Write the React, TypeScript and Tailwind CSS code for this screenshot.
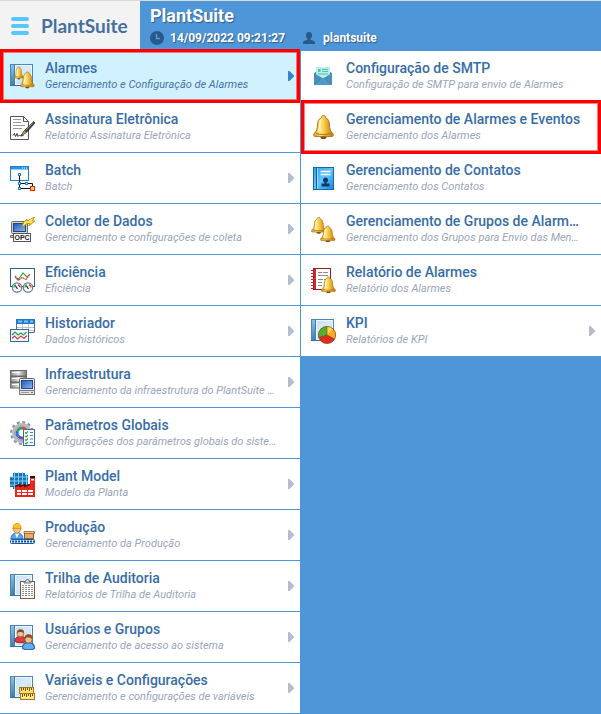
import type { ReactNode } from "react";
import clsx from "clsx";

type MenuItem = {
  title: string;
  desc: string;
  icon: ReactNode;
  hasChildren?: boolean;
  active?: boolean;
  marked?: boolean;
};

/* Gradients shared by all the menu icons */
function IconDefs() {
  return (
    <svg className="absolute h-0 w-0" aria-hidden="true">
      <defs>
        <linearGradient id="gold" x1="0" y1="0" x2="1" y2="0">
          <stop offset="0" stopColor="#d99a1c" />
          <stop offset="0.35" stopColor="#ffe98a" />
          <stop offset="0.6" stopColor="#f3bd35" />
          <stop offset="1" stopColor="#b97a10" />
        </linearGradient>
        <linearGradient id="page" x1="0" y1="0" x2="1" y2="1">
          <stop offset="0" stopColor="#c2dcf2" />
          <stop offset="0.5" stopColor="#d9ebf9" />
          <stop offset="1" stopColor="#a9cdea" />
        </linearGradient>
        <linearGradient id="spine" x1="0" y1="0" x2="0" y2="1">
          <stop offset="0" stopColor="#8dbfe3" />
          <stop offset="1" stopColor="#3f7fb2" />
        </linearGradient>
        <linearGradient id="screen" x1="0" y1="0" x2="1" y2="1">
          <stop offset="0" stopColor="#1f56b8" />
          <stop offset="1" stopColor="#8db9f2" />
        </linearGradient>
        <linearGradient id="steel" x1="0" y1="0" x2="1" y2="0">
          <stop offset="0" stopColor="#8a8a8a" />
          <stop offset="0.5" stopColor="#e2e2e2" />
          <stop offset="1" stopColor="#777777" />
        </linearGradient>
        <linearGradient id="azure" x1="0" y1="0" x2="1" y2="1">
          <stop offset="0" stopColor="#2ba3ee" />
          <stop offset="0.5" stopColor="#63c6ff" />
          <stop offset="1" stopColor="#1583d6" />
        </linearGradient>
      </defs>
    </svg>
  );
}

function Icon({ children }: { children: ReactNode }) {
  return (
    <svg className="h-[25px] w-[25px] shrink-0" viewBox="0 0 25 25" fill="none" aria-hidden="true">
      {children}
    </svg>
  );
}

function Book() {
  return (
    <g>
      <rect x="0.5" y="0.5" width="22" height="21" fill="url(#page)" stroke="#4d86b5" />
      <path d="M5.5 1.5h16v19h-16z" stroke="#eef7fd" />
      <path d="M1 1h3v20H1z" fill="url(#spine)" />
      <path d="M4.5 1v20" stroke="#3f7fb2" />
      <path d="M0 21.5h23" stroke="#356f9f" />
    </g>
  );
}

function Bell({ transform }: { transform?: string }) {
  return (
    <g transform={transform}>
      <ellipse cx="10.5" cy="22" rx="3" ry="2" fill="#7a4b08" />
      <path
        d="M10.5 .6c-1.5 0-2.3 1-2 2.1C5.6 3.800 4.600 6.500 4.500 10c-.1 4-.9 6.300-3.300 8.500-.9.900-.6 2.700.4 2.900h17.800c1-.2 1.300-2 .4-2.900-2.400-2.200-3.200-4.500-3.300-8.500-.1-3.500-1.100-6.200-4-7.300.3-1.100-.5-2.100-2-2.100z"
        fill="url(#gold)"
        stroke="#a66b0c"
        strokeWidth="0.9"
      />
      <path d="M7.5 5.5c-1 2.500-.5 8-2.300 11.500" stroke="#fff6c4" strokeWidth="1.4" />
      <path d="M3 18.5c4 1.300 11 1.300 15 0" stroke="#9c660e" strokeWidth="0.9" />
    </g>
  );
}

const AlarmsIcon = () => (
  <Icon>
    <Book />
    <Bell transform="translate(4 2.5) scale(.46 .54)" />
    <Bell transform="translate(10 7.5) scale(.7 .71)" />
  </Icon>
);

const SignatureIcon = () => (
  <Icon>
    <path d="M.5 1.5h13l5 5v18H.5z" fill="#fff" stroke="#555" />
    <path d="M13.5 1.5v5h5" stroke="#555" />
    <path d="M3 4.5h8M3 7.5h8M3 10.500h12M3 13.500h9" stroke="#9a9a9a" />
    <path d="M3 20.500l1.500-2 1 3 1.500-3 1 3 1.500-1.500 1 1 3-.5" stroke="#222" strokeWidth="0.9" />
    <path d="M23.800 6.600l-9.600 9.200-3.200 4.800 5-2.700 9-9.800z" fill="#3f3f3f" stroke="#222" strokeWidth="0.7" />
    <path d="M22.500 8.500l-7 7" stroke="#999" strokeWidth="0.9" />
    <path d="M14.400 15.500l1.800 2-4.400 2.500z" fill="#c09a4a" />
  </Icon>
);

const BatchIcon = () => (
  <Icon>
    <rect x="0.5" y="0.5" width="18" height="14" fill="#fff" stroke="#1a7fd8" />
    <path d="M1 1h17v2.500H1z" fill="#2b93ea" />
    <path d="M12 2h1M14 2h1M16 2h1" stroke="#fff" />
    <path d="M9.500 9v14M9.500 17.500h13v4M9.500 22.500h11" stroke="#111" />
    <g fill="#fff" stroke="#1a7fd8">
      <rect x="8.5" y="7.5" width="2" height="2" />
      <rect x="8.5" y="16.5" width="2" height="2" />
      <rect x="15.5" y="16.5" width="2" height="2" />
      <rect x="8.5" y="21.5" width="2" height="2" />
    </g>
    <rect x="20.5" y="20.5" width="4" height="4" fill="#ffd83a" stroke="#ec1c1c" />
  </Icon>
);

const CollectorIcon = () => (
  <Icon>
    <rect x="1.5" y="4.5" width="16" height="12" rx="1" fill="#d4d4d4" stroke="#686868" />
    <rect x="3.5" y="6.5" width="12" height="8" fill="url(#screen)" stroke="#23427c" />
    <path d="M.5 18.500h4v2h-4z" fill="#ccc" stroke="#686868" />
    <rect x="3.5" y="16.5" width="17" height="8" fill="#fff" stroke="#555" />
    <text x="4.500" y="23" fontSize="7" fill="#222" className="font-['Liberation_Sans'] font-bold">
      OPC
    </text>
    <path d="M17 4l7.500-4-2 4h2.300l-6 5 1-2.500h-2.500l-5.800 4.300 2.500-4.200h-2l5-4.600z" fill="#ffe23b" stroke="#a8830d" strokeWidth="0.8" />
    <path d="M22 2l-4 3.500M15 6l-2 2.500" stroke="#fff9b5" />
  </Icon>
);

const EfficiencyIcon = () => (
  <Icon>
    <rect x="0.5" y="0.5" width="24" height="18" fill="#fff" stroke="#3a5d90" />
    <path d="M5 9l3 3 5-7 4 4 2.500-2.500" stroke="#3fa63f" strokeWidth="1.2" />
    <path d="M5 8l4 4 3-2.500 4 2 4-5.500" stroke="#d5423d" strokeDasharray="2 0.6" strokeWidth="1.2" />
    {[7, 18].map((cx) => (
      <g key={cx}>
        <circle cx={cx} cy="19.5" r="4.7" fill="#fff" stroke="#5c7ba6" strokeWidth="1.2" />
        <path d={`M${cx - 3} 19.5a3 3 0 0 1 2-2.8`} stroke="#3fa63f" strokeWidth="1.5" />
        <path d={`M${cx + 1} 16.7a3 3 0 0 1 2 2.8`} stroke="#e13b35" strokeWidth="1.5" />
        <path d={`M${cx - 1.5} 18l2 2.8`} stroke="#222" strokeWidth="1.2" />
      </g>
    ))}
  </Icon>
);

const HistoryIcon = () => (
  <Icon>
    <path d="M6.500.5h18v13h-18z" fill="#fff" stroke="#596b7c" />
    <path d="M6 0h19v5H6z" fill="#2377c9" />
    <path d="M8 2.500h4M14 2.500h4M20 2.500h3" stroke="#79c6fb" strokeWidth="2" />
    <path d="M12.500 5v8.500M18.500 5v8.500M7 8.500h17M7 11.500h17" stroke="#bcc4cb" />
    <rect x="0.5" y="10.5" width="18" height="12" fill="#eff7ff" stroke="#2f69aa" />
    <path d="M2 16l3-3 3 3 3-2 2.500 2 3-3" stroke="#3b9a42" strokeWidth="1.2" />
    <path d="M2 19.500l2.500-2.500 3 3 3.500-3 3 2.500 3-3" stroke="#d6443d" strokeWidth="1.2" />
  </Icon>
);

const InfraIcon = () => (
  <Icon>
    {[0.5, 6.5, 12.5].map((y) => (
      <g key={y}>
        <rect x="0.5" y={y} width="16" height="5.5" fill="url(#steel)" stroke="#696969" />
        <path d={`M2 ${y + 2}h8`} stroke="#fff" />
      </g>
    ))}
    <rect x="9.5" y="8.5" width="15" height="12" rx="1" fill="#e9e9e9" stroke="#666" />
    <rect x="11.5" y="10.5" width="11" height="8" fill="url(#screen)" stroke="#214a96" />
    <rect x="9.5" y="20.5" width="15" height="4" fill="#e0e0e0" stroke="#777" />
    <path d="M11 22.500h8" stroke="#999" />
    <path d="M21 22.500h2" stroke="#46a046" />
  </Icon>
);

const ParamsIcon = () => (
  <Icon>
    <circle cx="12" cy="12" r="10.8" stroke="#8b9299" strokeWidth="2.2" strokeDasharray="3 2.65" />
    <circle cx="12" cy="12" r="8.5" stroke="#b4bac0" strokeWidth="3" />
    <circle cx="12" cy="12" r="7" fill="#fff" stroke="#7d858c" strokeWidth="0.7" />
    <path d="M12 7a5 5 0 0 0-4.500 3" stroke="#35a84a" strokeWidth="3" />
    <path d="M7.500 10a5 5 0 0 0 1 5.500" stroke="#2379d5" strokeWidth="3" />
    <path d="M8.500 15.500A5 5 0 0 0 13 17" stroke="#7b43b5" strokeWidth="3" />
    <path d="M12 7a5 5 0 0 1 4.500 3" stroke="#ee4035" strokeWidth="3" />
    <rect x="13.5" y="8.5" width="11" height="16" fill="#fff" stroke="#3b6ca8" />
    <path d="M15 11.500l1 1 2-2M15 15l1 1 2-2M15 18.500l1 1 2-2M15 22l1 1 2-2" stroke="#3ba343" strokeWidth="1.2" />
    <path d="M20 11.500h3M20 14.500h3M20 18h3M20 21.500h3" stroke="#4b7fbf" />
  </Icon>
);

const PlantIcon = () => (
  <Icon>
    <path d="M3 1h12v2h3v11H8v3H3v-2H0V5h3z" fill="#1771b8" />
    <path d="M0 5h18M0 9h18M0 13h17M4.500 0v17M8.500 0v17M12.500 0v14M16.500 2v11" stroke="#82cdf5" />
    <path d="M20 6h5v19H5V14l5-2v2l5-2v2l5-2z" fill="#ee2419" />
    <path d="M5 14.500l5-2v2l5-2v2l5-2" stroke="#471010" strokeWidth="1.5" />
    <path d="M20 4h5v2h-5z" fill="#2b1111" />
    <path d="M21 7h3v1.500h-3z" fill="#fff" />
    <path d="M7 18h4v2H7zM12 18h5v2h-5zM18 18h5v2h-5zM7 21h4v2H7zM12 21h5v2h-5zM18 21h5v2h-5z" fill="#fff" />
  </Icon>
);

const ProductionIcon = () => (
  <Icon>
    <path d="M1 16c0-4 2.500-6 6-6s6 2 6 6z" fill="#5aa9ee" stroke="#2769ad" />
    <path d="M5 10.500L7 15l2-4.500z" fill="#fff" />
    <circle cx="7" cy="6.5" r="3.5" fill="#f5c488" stroke="#b06e2c" strokeWidth="0.6" />
    <path d="M3 5.300C3 2 4.500.5 7 .5s4 1.500 4 4.800z" fill="#ffc524" stroke="#d58b00" strokeWidth="0.8" />
    <path d="M2.500 5.500h9" stroke="#e09a0b" />
    <rect x="14.5" y="9.5" width="9" height="6" fill="#e4ad6a" stroke="#905c28" />
    <path d="M14 8.500h10.500v2H14z" fill="#f3cc92" stroke="#905c28" strokeWidth="0.8" />
    <rect x="0.5" y="16.5" width="24" height="4" rx="1" fill="#e6f1ff" stroke="#1859a9" />
    <path d="M2 18.500h22" stroke="#114e9e" strokeDasharray="2 1" strokeWidth="2" />
  </Icon>
);

const AuditIcon = () => (
  <Icon>
    <Book />
    <rect x="10.5" y="7.5" width="14" height="17" fill="#fff" stroke="#87553a" />
    <path d="M14 9V7.500h1.500a2 2 0 0 1 4 0H21V9z" fill="#d9d9d9" stroke="#666" strokeWidth="0.9" />
    <path d="M12 11.500h11M12 13.500h11M12 15.500h11M12 17.500h11M12 19.500h11M12 21.500h11" stroke="#8c8c8c" strokeDasharray="2 1" />
  </Icon>
);

function Person({ transform, shirt, edge }: { transform: string; shirt: string; edge: string }) {
  return (
    <g transform={transform}>
      <path d="M0 12.500c0-4 2-5 5.500-5s5.500 1 5.500 5c-2 1.600-9 1.600-11 0z" fill={shirt} stroke={edge} strokeWidth="0.9" />
      <circle cx="5.5" cy="4.5" r="3.4" fill="#f3bf8b" stroke="#8c542a" strokeWidth="0.7" />
      <path d="M2 4.500C1.500 1.500 3.500.3 5.500.3s4.200 1 3.500 4.200C8 3.500 6.500 3 5.500 3c-1.500 0-2.500.3-3.500 1.500z" fill="#8a512a" />
    </g>
  );
}

const UsersIcon = () => (
  <Icon>
    <Book />
    <Person transform="translate(5 4)" shirt="#e2383b" edge="#9a1518" />
    <Person transform="translate(12.5 9) scale(1.1 1.15)" shirt="#61aef2" edge="#215fae" />
  </Icon>
);

const VariablesIcon = () => (
  <Icon>
    <Book />
    <rect x="9.5" y="11.5" width="14" height="6" fill="#ffe06c" stroke="#a87716" />
    <path d="M11.500 12v3M13.500 12v2M15.500 12v3M17.500 12v2M19.500 12v3M21.500 12v2" stroke="#76520e" />
    <rect x="10.5" y="17.5" width="14" height="6" fill="#ffe98c" stroke="#a87716" />
    <path d="M12.500 18v3M14.500 18v2M16.500 18v3M18.500 18v2M20.500 18v3M22.500 18v2" stroke="#76520e" />
  </Icon>
);

const SmtpIcon = () => (
  <Icon>
    <path d="M3 9.500L6 7h12l3 2.500V14H3z" fill="#2f6f9e" />
    <path d="M5 3h14v8l-7 5-7-5z" fill="#b5efe6" />
    <path d="M7 5h2.500v3H7zM11 5h6v1h-6zM11 7h6v1h-6zM7 9.500h10v1H7z" fill="#5abeb0" />
    <path d="M3 9l9 5.500L21 9v12H3z" fill="#4a90bd" />
    <path d="M3 21l7.500-7.500 1.500 1 1.500-1L21 21z" fill="#5299c5" />
    <path d="M3.500 20.500l7-6.500M20.500 20.500l-7-6.500" stroke="#3d7fab" />
  </Icon>
);

const BellIcon = () => (
  <Icon>
    <Bell transform="translate(2 0)" />
  </Icon>
);

const ContactsIcon = () => (
  <Icon>
    <rect x="2.5" y="1.5" width="20" height="22" fill="url(#azure)" stroke="#1267ad" />
    <path d="M5.500 2v21" stroke="#0e5c9f" />
    <path d="M6.500 2v21" stroke="#9bdcff" />
    <path d="M9.500 5.500h10M9.500 8.500h10" stroke="#fff" strokeWidth="1.5" />
    <circle cx="14.5" cy="14" r="2.5" fill="#10395f" />
    <path d="M13.500 15h2v2.500h3v3h-8v-3h3z" fill="#10395f" />
  </Icon>
);

const GroupsIcon = () => (
  <Icon>
    <Bell transform="scale(.74 .7)" />
    <Bell transform="translate(9 8.5) scale(.74 .7)" />
  </Icon>
);

const ReportIcon = () => (
  <Icon>
    <rect x="2.5" y="0.5" width="17" height="21" fill="#fff" stroke="#9d1c20" />
    <path d="M3 1h2v20H3z" fill="#da2a2d" />
    <path d="M0 2.500h5M0 5.500h5M0 8.500h5M0 11.500h5M0 14.500h5M0 17.500h5M0 20.500h5" stroke="#c6262b" />
    <path d="M7 4.500h4M12 4.500h5M7 7.500h10M7 11.500h5M13 11.500h3M7 14.500h4M7 17.500h4" stroke="#8a8a8a" />
    <Bell transform="translate(10 8.5) scale(.71 .7)" />
  </Icon>
);

const KpiIcon = () => (
  <Icon>
    <Book />
    <circle cx="16" cy="16" r="8.6" fill="#e02d22" />
    <path d="M16 16L7.800 18.500A8.600 8.600 0 0 1 16 7.400z" fill="#53b02f" />
    <path d="M16 16V7.400a8.600 8.600 0 0 1 7.600 12.600z" fill="#f9ae22" />
    <path d="M16 16V7.400a8.600 8.600 0 0 1 6 2.400z" fill="#ffd655" />
    <path d="M16 7.400V16l7.600 4M16 16l-8.200 2.500" stroke="#8d3a12" strokeWidth="0.6" />
    <circle cx="16" cy="16" r="8.6" stroke="#7b4b14" strokeWidth="0.7" />
  </Icon>
);

const mainMenu: MenuItem[] = [
  { title: "Alarmes", desc: "Gerenciamento e Configuração de Alarmes", icon: <AlarmsIcon />, hasChildren: true, active: true, marked: true },
  { title: "Assinatura Eletrônica", desc: "Relatório Assinatura Eletrônica", icon: <SignatureIcon /> },
  { title: "Batch", desc: "Batch", icon: <BatchIcon />, hasChildren: true },
  { title: "Coletor de Dados", desc: "Gerenciamento e configurações de coleta", icon: <CollectorIcon />, hasChildren: true },
  { title: "Eficiência", desc: "Eficiência", icon: <EfficiencyIcon />, hasChildren: true },
  { title: "Historiador", desc: "Dados históricos", icon: <HistoryIcon />, hasChildren: true },
  { title: "Infraestrutura", desc: "Gerenciamento da infraestrutura do PlantSuite …", icon: <InfraIcon />, hasChildren: true },
  { title: "Parâmetros Globais", desc: "Configurações dos parâmetros globais do siste…", icon: <ParamsIcon /> },
  { title: "Plant Model", desc: "Modelo da Planta", icon: <PlantIcon />, hasChildren: true },
  { title: "Produção", desc: "Gerenciamento da Produção", icon: <ProductionIcon />, hasChildren: true },
  { title: "Trilha de Auditoria", desc: "Relatórios de Trilha de Auditoria", icon: <AuditIcon />, hasChildren: true },
  { title: "Usuários e Grupos", desc: "Gerenciamento de acesso ao sistema", icon: <UsersIcon />, hasChildren: true },
  { title: "Variáveis e Configurações", desc: "Gerenciamento e configurações de variáveis", icon: <VariablesIcon />, hasChildren: true },
];

const alarmsMenu: MenuItem[] = [
  { title: "Configuração de SMTP", desc: "Configuração de SMTP para envio de Alarmes", icon: <SmtpIcon /> },
  { title: "Gerenciamento de Alarmes e Eventos", desc: "Gerenciamento dos Alarmes", icon: <BellIcon />, marked: true },
  { title: "Gerenciamento de Contatos", desc: "Gerenciamento dos Contatos", icon: <ContactsIcon /> },
  { title: "Gerenciamento de Grupos de Alarm…", desc: "Gerenciamento dos Grupos para Envio das Men…", icon: <GroupsIcon /> },
  { title: "Relatório de Alarmes", desc: "Relatório dos Alarmes", icon: <ReportIcon /> },
  { title: "KPI", desc: "Relatórios de KPI", icon: <KpiIcon />, hasChildren: true },
];

function MenuRow({ item }: { item: MenuItem }) {
  return (
    <li className="relative border-b border-[#4f96d8]">
      <a href="#" className={clsx("flex h-[50px] items-center pr-1.5 pl-2.5", item.active ? "bg-[#d1f1ff]" : "bg-white")}>
        {item.icon}
        <span className="ml-2.5 min-w-0 flex-1">
          <span className="block truncate text-[14px] leading-[18px] font-medium text-[#376da6]">{item.title}</span>
          <span className={clsx("block truncate text-[11px] leading-4 italic", item.active ? "text-[#4673a8]" : "text-[#98a5ba]")}>
            {item.desc}
          </span>
        </span>
        <span className="flex w-3.5 justify-end">
          {item.hasChildren && (
            <svg className={clsx("h-2.5 w-1.5", item.active ? "text-[#3388cb]" : "text-[#b4bdcb]")} viewBox="0 0 6 10" aria-hidden="true">
              <path d="M0 0h1.500L6 4.500v1L1.500 10H0z" fill="currentColor" />
            </svg>
          )}
        </span>
      </a>
      {item.marked && (
        <span className="pointer-events-none absolute inset-x-0 -inset-y-0.5 z-10 border-[3px] border-[#ff0000] shadow-[inset_0_0_0_1px_#ff000080]" />
      )}
    </li>
  );
}

export default function App() {
  return (
    <div className="min-h-screen bg-[#4f96d8] font-['Roboto',sans-serif]">
      <IconDefs />
      <header className="flex h-[51px] border-t border-[#d9d9d9]">
        <div className="flex w-[140px] shrink-0 items-center bg-[#f3f3f3] pl-[11px]">
          <button type="button" aria-label="Menu" className="flex w-[18px] flex-col gap-[3px]">
            <span className="h-1 rounded-full bg-[#56c7fa]" />
            <span className="h-1 rounded-full bg-[#56c7fa]" />
            <span className="h-1 rounded-full bg-[#56c7fa]" />
          </button>
          <span className="ml-3 font-['Lato',sans-serif] text-[19px] leading-6 font-bold text-[#456f9f]">PlantSuite</span>
        </div>
        <div className="flex flex-col justify-center pl-2.5 text-white [text-shadow:1px_1px_1px_#2c5d8f]">
          <h1 className="text-[18px] leading-6 font-bold">PlantSuite</h1>
          <div className="flex items-center text-[12px] leading-5 font-bold">
            <svg className="mr-1.5 h-3.5 w-3.5" viewBox="0 0 14 14" fill="none" aria-hidden="true">
              <circle cx="7" cy="7" r="7" fill="#28598b" />
              <path d="M6.500 3v4.500H10" stroke="#5b9bd6" strokeWidth="1.5" />
            </svg>
            <span>14/09/2022 09:21:27</span>
            <svg className="mr-2 ml-[18px] h-3 w-3" viewBox="0 0 12 12" aria-hidden="true">
              <path d="M6 0c2 0 3 1.200 3 3.200 0 1.600-.7 2.800-1.500 3.500v1C9 8.300 12 8.800 12 10.500V12H0v-1.500C0 8.800 3 8.300 4.500 7.700v-1C3.700 6 3 4.800 3 3.200 3 1.200 4 0 6 0z" fill="#28598b" />
            </svg>
            <span>plantsuite</span>
          </div>
        </div>
      </header>
      <nav className="grid grid-cols-2 items-start gap-x-px">
        <ul>
          {mainMenu.map((item) => (
            <MenuRow key={item.title} item={item} />
          ))}
        </ul>
        <ul>
          {alarmsMenu.map((item) => (
            <MenuRow key={item.title} item={item} />
          ))}
        </ul>
      </nav>
    </div>
  );
}
